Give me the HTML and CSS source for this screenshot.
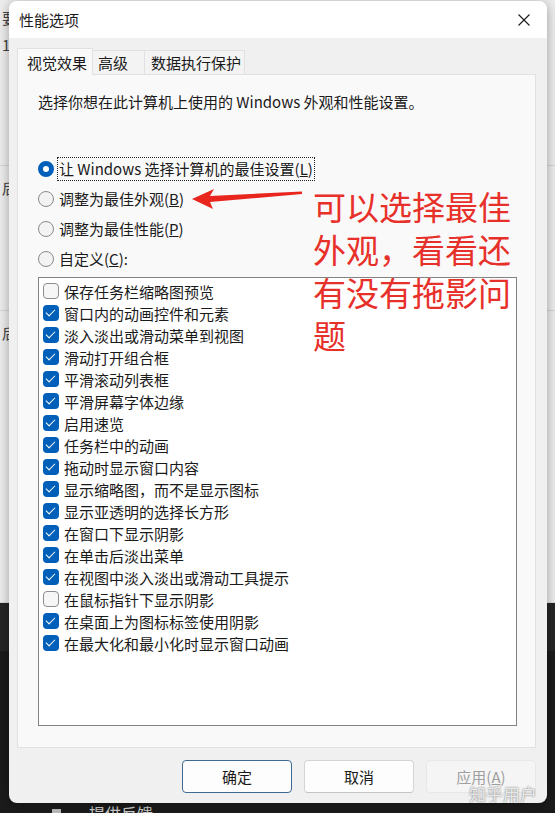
FILE: index.html
```html
<!DOCTYPE html>
<html lang="zh-CN">
<head>
    <meta charset="utf-8">
    <title>性能选项</title>
    <link rel="stylesheet" href="styles.css">
</head>
<body>
    <!-- Fenster im Hintergrund -->
    <div class="backdrop">
        <div class="bg-window">
            <div class="bg-row">要</div>
            <div class="bg-row">1</div>
            <div class="bg-row bg-split">后</div>
            <div class="bg-row bg-split">后</div>
        </div>
        <div class="bg-taskbar">
            <div class="bg-item"><span class="bg-icon"></span>提供反馈</div>
        </div>
    </div>

    <div class="dialog">
        <div class="titlebar">
            <span class="title">性能选项</span>
            <span class="close-btn">
                <svg width="12" height="12" viewBox="0 0 12 12"><path d="M0.5 0.5 L11.5 11.5 M11.5 0.5 L0.5 11.5" stroke="#1a1a1a" stroke-width="1.1" fill="none"/></svg>
            </span>
        </div>

        <div class="dialog-body">
            <div class="tabs">
                <div class="tab tab-active">视觉效果</div>
                <div class="tab tab-advanced">高级</div>
                <div class="tab tab-dep">数据执行保护</div>
            </div>

            <div class="panel">
                <p class="intro">选择你想在此计算机上使用的 Windows 外观和性能设置。</p>

                <div class="radios">
                    <div class="radio-row"><span class="radio radio-on"></span><span class="label label-focus">让 Windows 选择计算机的最佳设置(<u>L</u>)</span></div>
                    <div class="radio-row"><span class="radio"></span><span class="label">调整为最佳外观(<u>B</u>)</span></div>
                    <div class="radio-row"><span class="radio"></span><span class="label">调整为最佳性能(<u>P</u>)</span></div>
                    <div class="radio-row"><span class="radio"></span><span class="label">自定义(<u>C</u>):</span></div>
                </div>

                <ul class="listbox">
                    <li><span class="check"></span>保存任务栏缩略图预览</li>
                    <li><span class="check on"></span>窗口内的动画控件和元素</li>
                    <li><span class="check on"></span>淡入淡出或滑动菜单到视图</li>
                    <li><span class="check on"></span>滑动打开组合框</li>
                    <li><span class="check on"></span>平滑滚动列表框</li>
                    <li><span class="check on"></span>平滑屏幕字体边缘</li>
                    <li><span class="check on"></span>启用速览</li>
                    <li><span class="check on"></span>任务栏中的动画</li>
                    <li><span class="check on"></span>拖动时显示窗口内容</li>
                    <li><span class="check on"></span>显示缩略图，而不是显示图标</li>
                    <li><span class="check on"></span>显示亚透明的选择长方形</li>
                    <li><span class="check on"></span>在窗口下显示阴影</li>
                    <li><span class="check on"></span>在单击后淡出菜单</li>
                    <li><span class="check on"></span>在视图中淡入淡出或滑动工具提示</li>
                    <li><span class="check"></span>在鼠标指针下显示阴影</li>
                    <li><span class="check on"></span>在桌面上为图标标签使用阴影</li>
                    <li><span class="check on"></span>在最大化和最小化时显示窗口动画</li>
                </ul>
            </div>

            <div class="buttons">
                <button class="btn btn-default">确定</button>
                <button class="btn">取消</button>
                <button class="btn btn-disabled">应用(<u>A</u>)</button>
            </div>
        </div>
    </div>

    <!-- Markierung -->
    <svg class="arrow" width="120" height="30" viewBox="0 0 120 30">
        <polygon points="4,15 26,5 22,12 114,7.5 114,10 22,18 25,25" fill="#e8261e"/>
    </svg>
    <div class="note">可以选择最佳<br>外观，看看还<br>有没有拖影问<br>题</div>

    <div class="watermark">知乎用户</div>
</body>
</html>
```

FILE: styles.css
```css
body {
    margin: 0;
    width: 555px;
    height: 813px;
    overflow: hidden;
    position: relative;
    background-color: #1b1b1b;
    font-family: "Noto Sans CJK SC", "Noto Sans", sans-serif;
    font-size: 15px;
    color: #1a1a1a;
}

/* Hintergrund */
.backdrop {
    height: 100%;
    display: flex;
    flex-direction: column;
}

.bg-window {
    height: 603px;
    padding-top: 7px;
    background-color: #ededed;
    border-bottom: 1px solid #dadada;
    box-sizing: border-box;
    color: #444;
}

.bg-row {
    padding-left: 2px;
    line-height: 22px;
    height: 22px;
}

.bg-row:nth-child(2) {
    margin-top: 5px;
}

.bg-split {
    border-top: 1px solid #d6d6d6;
    padding-top: 11px;
}

.bg-row:nth-child(3) {
    margin-top: 109px;
}

.bg-row:nth-child(4) {
    margin-top: 111px;
}

.bg-taskbar {
    flex: 1;
    display: flex;
    flex-direction: column;
    justify-content: flex-end;
    background: linear-gradient(#262626 0, #262626 48px, #1b1b1b 48px);
}

.bg-item {
    display: flex;
    align-items: center;
    gap: 28px;
    padding-left: 52px;
    margin-bottom: -11px;
    height: 22px;
    color: #cfcfcf;
    font-size: 16px;
}

.bg-icon {
    width: 9px;
    height: 9px;
    background-color: #bdbdbd;
}

/* Dialog */
.dialog {
    position: absolute;
    left: 9px;
    top: 1px;
    width: 538px;
    height: 802px;
    border-radius: 8px;
    background-color: #f0f0f0;
    box-shadow: 0 2px 12px rgba(0, 0, 0, 0.35);
    overflow: hidden;
}

.titlebar {
    height: 37px;
    background-color: #fff;
    display: flex;
    align-items: center;
    justify-content: space-between;
    padding-left: 10px;
}

.close-btn {
    width: 46px;
    height: 37px;
    display: flex;
    align-items: center;
    justify-content: center;
}

.dialog-body {
    padding: 10px 11px 0 8px;
}

.tabs {
    display: flex;
    align-items: flex-end;
    height: 26px;
}

.tab {
    height: 24px;
    line-height: 23px;
    box-sizing: border-box;
    background-color: #f3f3f3;
    border: 1px solid #e1e1e1;
    border-bottom: none;
}

.tab-active {
    position: relative;
    z-index: 1;
    height: 27px;
    line-height: 27px;
    margin-bottom: -1px;
    width: 76px;
    padding-left: 9px;
    background-color: #f9f9f9;
}

.tab-advanced {
    width: 52px;
    padding-left: 5px;
    border-left: none;
}

.tab-dep {
    width: 100px;
    padding-left: 6px;
    border-left: none;
}

.panel {
    height: 674px;
    box-sizing: border-box;
    background-color: #f9f9f9;
    border: 1px solid #e1e1e1;
    padding: 0 17px 0 20px;
}

.intro {
    margin: 16px 0 0 0;
    line-height: 22px;
}

.radios {
    margin-top: 41px;
}

.radio-row {
    height: 30px;
    display: flex;
    align-items: center;
    gap: 3px;
}

.radio {
    width: 16px;
    height: 16px;
    box-sizing: border-box;
    border-radius: 50%;
    border: 1px solid #8a8a8a;
    background-color: #f3f3f3;
}

.radio-on {
    border: 5px solid #005fb8;
    background-color: #fff;
}

.label {
    line-height: 22px;
    border: 1px solid transparent;
    padding: 0 1px;
}

.label-focus {
    border: 1px dotted #222;
}

.listbox {
    list-style: none;
    margin: 3px 0 0 0;
    padding: 2px 0 0 4px;
    width: 479px;
    height: 449px;
    box-sizing: border-box;
    background-color: #fff;
    border: 1px solid #828282;
}

.listbox li {
    height: 22px;
    display: flex;
    align-items: center;
    gap: 5px;
}

.check {
    width: 16px;
    height: 16px;
    box-sizing: border-box;
    border-radius: 4px;
    border: 1px solid #8d8d8d;
    background-color: #f6f6f6;
    position: relative;
}

.check.on {
    border: none;
    background-color: #005fb8;
}

.check.on::after {
    content: "";
    position: absolute;
    left: 5px;
    top: 2px;
    width: 4px;
    height: 8px;
    border-right: 1.4px solid #fff;
    border-bottom: 1.4px solid #fff;
    transform: rotate(45deg);
}

.buttons {
    display: flex;
    justify-content: flex-end;
    gap: 12px;
    margin-top: 12px;
}

.btn {
    width: 110px;
    height: 33px;
    font-family: inherit;
    font-size: 15px;
    color: #1a1a1a;
    background-color: #fdfdfd;
    border: 1px solid #d4d4d4;
    border-bottom-color: #c4c4c4;
    border-radius: 4px;
}

.btn-default {
    border: 1px solid #3e6a93;
}

.btn-disabled {
    background-color: #f5f5f5;
    border-color: #e8e8e8;
    color: #9f9f9f;
}

/* Markierung */
.arrow {
    position: absolute;
    left: 188px;
    top: 184px;
}

.note {
    position: absolute;
    left: 313px;
    top: 185px;
    font-size: 33px;
    line-height: 43px;
    color: #e8302a;
}

.watermark {
    position: absolute;
    left: 469px;
    top: 782px;
    font-size: 17px;
    line-height: 24px;
    color: rgba(245, 245, 245, 0.9);
    text-shadow: 0 0 2px rgba(0, 0, 0, 0.6);
}
```
